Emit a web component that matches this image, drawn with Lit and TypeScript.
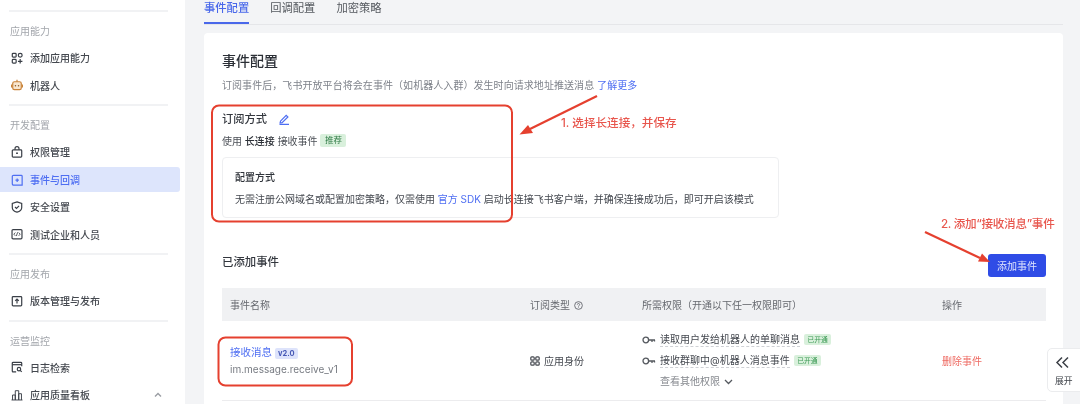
import { LitElement, html, css, svg } from "lit";
import { customElement } from "lit/decorators.js";

const icons: Record<string, any> = {
  add: svg`<rect x="1.5" y="1.5" width="4.5" height="4.5" rx="1"/><rect x="8.5" y="1.5" width="4.5" height="4.5" rx="2.2"/><rect x="1.5" y="8.5" width="4.5" height="4.5" rx="1"/><path d="M10.7 8.3v5.2M8.1 10.9h5.2"/>`,
  bot: svg`<g stroke="#c9833a"><rect x="2" y="3.2" width="10" height="9.300" rx="2" fill="#f8e6cf"/><path d="M7 3.200V1M.6 6.500v3.500M13.400 6.500v3.500"/></g><circle cx="5.200" cy="7.800" r=".9" fill="#8a5a24" stroke="none"/><circle cx="8.800" cy="7.800" r=".9" fill="#8a5a24" stroke="none"/>`,
  lock: svg`<rect x="1.5" y="4.5" width="11" height="8.5" rx="1"/><path d="M4.7 4.5V3a2.3 2.3 0 0 1 4.6 0v1.5"/><path d="M5.8 8.4h2.4" stroke-width="1.6"/>`,
  event: svg`<path d="M3 1.5h9a1 1 0 0 1 1 1v10.500H3a1.500 1.500 0 0 1-1.500-1.500V3A1.500 1.500 0 0 1 3 1.500z"/><path d="M7.200 5.200v4M5.200 7.200h4"/>`,
  shield: svg`<path d="M7 1l5.500 1.800v4.700c0 2.800-2.300 4.700-5.500 5.500-3.200-.8-5.500-2.700-5.500-5.500V2.800z"/><path d="M4.700 7l1.700 1.700 3-3"/>`,
  code: svg`<rect x="1.200" y="1.800" width="11.600" height="10.800" rx="1.200"/><path d="M5 5.300L3.300 7.200 5 9.100M9 5.300l1.700 1.900L9 9.100M7.700 5l-1.400 4.400" stroke-width="1"/>`,
  upload: svg`<rect x="1.500" y="1.800" width="11" height="10.800" rx="1"/><path d="M7 10V5M4.900 6.900L7 4.800l2.100 2.100"/>`,
  log: svg`<path d="M6 12.800H2.500a1 1 0 0 1-1-1V2.500a1 1 0 0 1 1-1h9a1 1 0 0 1 1 1V6"/><path d="M1.500 4.300h11"/><circle cx="9.300" cy="9.500" r="2"/><path d="M10.800 11l1.700 1.700"/>`,
  chart: svg`<path d="M.6 12.800h12.800M1.800 12.800V7h3.200v5.800M5 12.800V2h4v10.800M9 12.800V5.500h3.200v7.300" stroke-width="1.100"/>`,
};

const sections: { title: string; items: [string, string, boolean?][] }[] = [
  { title: "应用能力", items: [["add", "添加应用能力"], ["bot", "机器人"]] },
  { title: "开发配置", items: [["lock", "权限管理"], ["event", "事件与回调", true], ["shield", "安全设置"], ["code", "测试企业和人员"]] },
  { title: "应用发布", items: [["upload", "版本管理与发布"]] },
  { title: "运营监控", items: [["log", "日志检索"], ["chart", "应用质量看板"]] },
];

@customElement("app-root")
export class AppRoot extends LitElement {
  static styles = css`
    :host { display: block; position: relative; width: 1080px; height: 404px; overflow: hidden; background: #f3f4f6;
      font-family: Inter, "Noto Sans CJK SC", "Liberation Sans", sans-serif; font-size: 10px; color: #3c4047; filter: blur(.4px); }
    .page { display: flex; height: 404px; }
    .side { width: 185px; flex: none; background: #fff; padding-top: 10px; box-sizing: border-box; overflow: hidden; }
    .sec { border-top: 2px solid #f1f2f4; margin: 0 17px 0 9px; }
    .section { margin-bottom: 5px; }
    .sec-title { margin: 12px 0 0 10px; color: #a3a6ac; line-height: 14px; height: 14px; }
    .items { margin-top: 6px; }
    .item { display: flex; align-items: center; gap: 7px; height: 27.500px; padding-left: 11px; width: 169px; box-sizing: border-box; border-radius: 0 3px 3px 0; position: relative; color: #44484f; font-weight: 500; }
    .item.on { background: #dde5fc; color: #4e6ef2; height: 25px; margin: 1.500px 0 1px; width: 180px; }
    .item svg { width: 12px; height: 12px; fill: none; stroke: #3a3f47; stroke-width: 1.400; flex: none; }
    .item.on svg { stroke: #4e6ef2; }
    .item .up { position: absolute; right: 6px; width: 10px; height: 10px; stroke: #9a9da3; }
    .main { flex: 1; padding: 0 17px 0 19px; min-width: 0; }
    .tabs { display: flex; gap: 21px; height: 24px; border-bottom: 1px solid #e5e6e9; font-size: 11.300px; line-height: 17px; color: #55595f; }
    .tab.on { color: #4a68ea; font-weight: 500; height: 24px; border-bottom: 2px solid #4a68ea; margin-bottom: -1px; box-sizing: border-box; }
    .card { margin-top: 8px; background: #fff; border-radius: 4px; height: 400px; padding: 18px 17px 0 18px; box-sizing: border-box; }
    h1 { margin: 0; font-size: 14px; line-height: 20px; font-weight: 500; color: #2b2f36; }
    .sub { margin-top: 6px; line-height: 16px; color: #7e828a; white-space: nowrap; letter-spacing: .06px; }
    a { color: #4e6ef2; }
    .way { margin-top: 18px; display: flex; align-items: center; gap: 11px; font-size: 11.250px; line-height: 16px; font-weight: 500; color: #33373e; }
    .way svg { width: 12px; height: 12px; fill: none; stroke: #4e6ef2; stroke-width: 1.200; }
    .use { margin-top: 5px; display: flex; align-items: center; height: 16px; color: #4b4f56; white-space: pre; }
    .use b { font-weight: 500; color: #2b2f36; }
    .tag { background: #d9f0dc; color: #2f7a45; border-radius: 2px; font-size: 8.500px; line-height: 13px; padding: 0 4.500px; }
    .box { margin-top: 9px; width: 557px; height: 61px; border: 1px solid #eeeff1; border-radius: 4px; box-sizing: border-box; padding: 12px 12px 0; }
    .box h3 { margin: 0; font-size: 10px; line-height: 14px; font-weight: 500; color: #2f333a; }
    .box p { margin: 8px 0 0; line-height: 14px; color: #44484f; white-space: nowrap; }
    .head { display: flex; justify-content: space-between; align-items: flex-start; margin-top: 36px; height: 23px; }
    .head h2 { margin: 0; font-size: 11.400px; line-height: 16px; font-weight: 500; color: #33373e; }
    .btn { width: 58px; height: 23px; display: flex; align-items: center; justify-content: center; background: #2f4ce6; color: #dfe4fd; border-radius: 3px; }
    .table { margin-top: 11px; }
    .row { display: grid; grid-template-columns: 300px 112px 300px 112px; }
    .row > div { padding-left: 8px; }
    .thead { height: 33px; background: #f0f1f3; align-items: center; color: #66696f; }
    .tbody { height: 80px; border-bottom: 1px solid #ececee; box-sizing: border-box; align-items: center; }
    .name { padding-bottom: 3px; }
    .name a { font-size: 10.500px; }
    .ver { background: #dde3fb; color: #4659b5; font-size: 7.500px; font-weight: 700; padding: 1px 3px; border-radius: 2px; margin-left: 3px; }
    .key { margin-top: 4px; color: #777b82; }
    .q { display: inline-block; vertical-align: -1px; width: 9px; height: 9px; fill: none; stroke: #66696f; stroke-width: 1; margin-left: 4px; }
    .type { display: flex; align-items: center; gap: 4px; color: #44484f; }
    .type svg { width: 10px; height: 10px; fill: none; stroke: #44484f; stroke-width: 1.200; }
    .perm { display: flex; align-items: center; height: 21px; color: #44484f; gap: 4px; }
    .perm svg { width: 14px; height: 8px; fill: none; stroke: #55595f; stroke-width: 1.300; flex: none; }
    .perm span.t { border-bottom: 1px dashed #cfd1d5; line-height: 13px; }
    .open { background: #d9f0dc; color: #3c9a55; font-size: 6.800px; line-height: 11px; padding: 0 3.500px; border-radius: 2px; }
    .more { padding-left: 18px; color: #85888e; line-height: 21px; display: flex; align-items: center; gap: 4px; }
    .more svg { width: 9px; height: 6px; fill: none; stroke: #55595f; stroke-width: 1.300; }
    .del { color: #ee6a62; }
    .expand { position: absolute; left: 1047px; top: 348px; width: 40px; height: 44px; background: #fff; border: 1px solid #ebecee; border-radius: 5px; box-sizing: border-box; padding: 7px 0 0 7px; font-size: 8.800px; color: #3c4047; line-height: 12px; }
    .expand svg { display: block; width: 15px; height: 13px; fill: none; stroke: #3c4047; stroke-width: 1.500; margin-bottom: 6px; }
    .marks { position: absolute; inset: 0; width: 1080px; height: 404px; pointer-events: none; fill: none; }
    .note { position: absolute; color: #e8574e; font-size: 11.600px; font-weight: 500; line-height: 16px; white-space: nowrap; }
    .n1 { left: 561px; top: 115px; }
    .n2 { left: 941px; top: 216px; letter-spacing: -.3px; }
  `;

  render() {
    return html`
      <div class="page">
        <aside class="side">
          ${sections.map((s) => html`
            <div class="sec"></div>
            <div class="section">
              <div class="sec-title">${s.title}</div>
              <div class="items">
                ${s.items.map(([ic, label, on]) => html`
                  <div class="item ${on ? "on" : ""}">
                    <svg viewBox="0 0 14 14">${icons[ic]}</svg>${label}
                    ${label === "应用质量看板" ? html`<svg class="up" viewBox="0 0 10 10"><path d="M2 6.500l3-3 3 3"/></svg>` : ""}
                  </div>`)}
              </div>
            </div>`)}
        </aside>
        <main class="main">
          <nav class="tabs"><div class="tab on">事件配置</div><div class="tab">回调配置</div><div class="tab">加密策略</div></nav>
          <section class="card">
            <h1>事件配置</h1>
            <div class="sub">订阅事件后，飞书开放平台将会在事件（如机器人入群）发生时向请求地址推送消息 <a>了解更多</a></div>
            <div class="way">订阅方式
              <svg viewBox="0 0 12 12"><path d="M2.500 8.200L8.200 2.300l1.700 1.600-5.800 5.800-2 .2zM1.500 11.300h9.500"/></svg>
            </div>
            <div class="use">使用 <b>长连接</b> 接收事件 <span class="tag">推荐</span></div>
            <div class="box">
              <h3>配置方式</h3>
              <p>无需注册公网域名或配置加密策略，仅需使用 <a>官方 SDK</a> 启动长连接飞书客户端，并确保连接成功后，即可开启该模式</p>
            </div>
            <div class="head"><h2>已添加事件</h2><div class="btn">添加事件</div></div>
            <div class="table">
              <div class="row thead">
                <div>事件名称</div>
                <div>订阅类型<svg class="q" viewBox="0 0 10 10"><circle cx="5" cy="5" r="4.300"/><path d="M3.700 4a1.300 1.300 0 1 1 1.900 1.200c-.4.200-.6.400-.6.900M5 7.200v.6"/></svg></div>
                <div>所需权限（开通以下任一权限即可）</div>
                <div>操作</div>
              </div>
              <div class="row tbody">
                <div class="name"><a>接收消息</a><span class="ver">v2.0</span><div class="key">im.message.receive_v1</div></div>
                <div class="type"><svg viewBox="0 0 10 10"><rect x=".8" y=".8" width="3.400" height="3.400" rx="1"/><rect x="5.800" y=".8" width="3.400" height="3.400" rx="1"/><rect x=".8" y="5.800" width="3.400" height="3.400" rx="1"/><rect x="5.800" y="5.800" width="3.400" height="3.400" rx="1"/></svg>应用身份</div>
                <div>
                  <div class="perm"><svg viewBox="0 0 14 8"><circle cx="3.800" cy="4" r="2.800"/><path d="M6.600 4h6.400M10 4v2M12.500 4v1.500"/></svg><span class="t">读取用户发给机器人的单聊消息</span><span class="open">已开通</span></div>
                  <div class="perm"><svg viewBox="0 0 14 8"><circle cx="3.800" cy="4" r="2.800"/><path d="M6.600 4h6.400M10 4v2M12.500 4v1.500"/></svg><span class="t">接收群聊中@机器人消息事件</span><span class="open">已开通</span></div>
                  <div class="more">查看其他权限<svg viewBox="0 0 9 6"><path d="M1 1l3.500 3.500L8 1"/></svg></div>
                </div>
                <div class="del">删除事件</div>
              </div>
            </div>
          </section>
        </main>
      </div>
      <div class="expand">
        <svg viewBox="0 0 15 13"><path d="M7 1.500L2 6.500l5 5M13 1.500l-5 5 5 5"/></svg>展开
      </div>
      <svg class="marks" viewBox="0 0 1080 404">
        <rect x="212" y="105.500" width="300" height="116" rx="7" stroke="#e5402f" stroke-width="2"/>
        <rect x="218.500" y="337.500" width="133.500" height="48" rx="7" stroke="#e5402f" stroke-width="2"/>
        <path d="M597 96L530 129" stroke="#e5402f" stroke-width="2.200"/>
        <path d="M519.500 134.500l8.500-9.500 5 8z" fill="#e5402f"/>
        <path d="M925 232L980 258" stroke="#e5402f" stroke-width="2.200"/>
        <path d="M990 262l-12-.5 4-8z" fill="#e5402f"/>
      </svg>
      <div class="note n1">1. 选择长连接，并保存</div>
      <div class="note n2">2. 添加“接收消息”事件</div>
    `;
  }
}
